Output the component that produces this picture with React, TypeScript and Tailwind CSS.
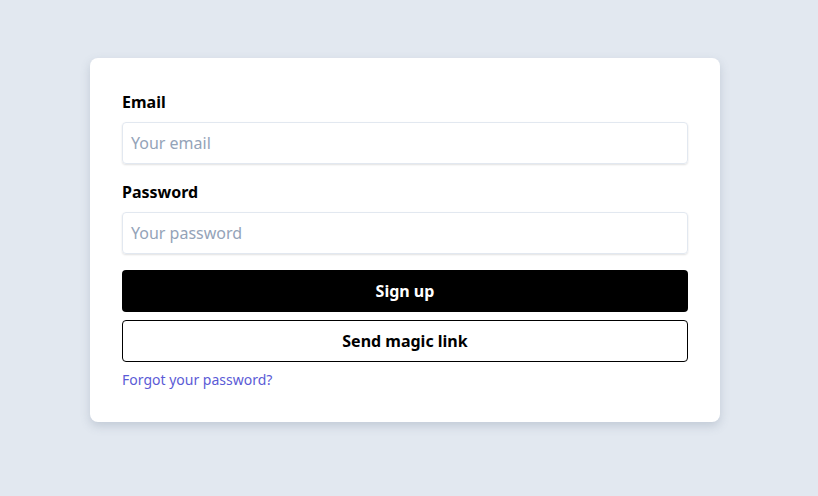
export default function App() {
  return (
    <div
      className="w-[818px] h-[496px] bg-[#e2e8f0] pt-[58px] pl-[90px]"
      style={{ fontFamily: '"Noto Sans", "Open Sans", sans-serif' }}
    >
      <div className="w-[630px] h-[364px] bg-white rounded-[8px] shadow-[0_4px_10px_rgba(100,116,139,0.25)] p-[32px] flex flex-col">
        <label className="text-[16px] leading-[24px] font-bold text-black">Email</label>
        <div className="mt-[8px] h-[42px] rounded-[4px] border border-[#e2e8f0] shadow-[0_1px_2px_rgba(0,0,0,0.12)] flex items-center pl-[8px] text-[16px] text-[#94a3b8]">
          Your email
        </div>
        <label className="mt-[16px] text-[16px] leading-[24px] font-bold text-black">Password</label>
        <div className="mt-[8px] h-[42px] rounded-[4px] border border-[#e2e8f0] shadow-[0_1px_2px_rgba(0,0,0,0.12)] flex items-center pl-[8px] text-[16px] text-[#94a3b8]">
          Your password
        </div>
        <button className="mt-[16px] h-[42px] rounded-[4px] bg-black text-white text-[16px] font-bold flex items-center justify-center">
          Sign up
        </button>
        <button className="mt-[8px] h-[42px] rounded-[4px] bg-white border border-black text-black text-[16px] font-bold flex items-center justify-center">
          Send magic link
        </button>
        <a className="mt-[8px] text-[14px] leading-[20px] text-[#5b5bd6] self-start">Forgot your password?</a>
      </div>
    </div>
  );
}
